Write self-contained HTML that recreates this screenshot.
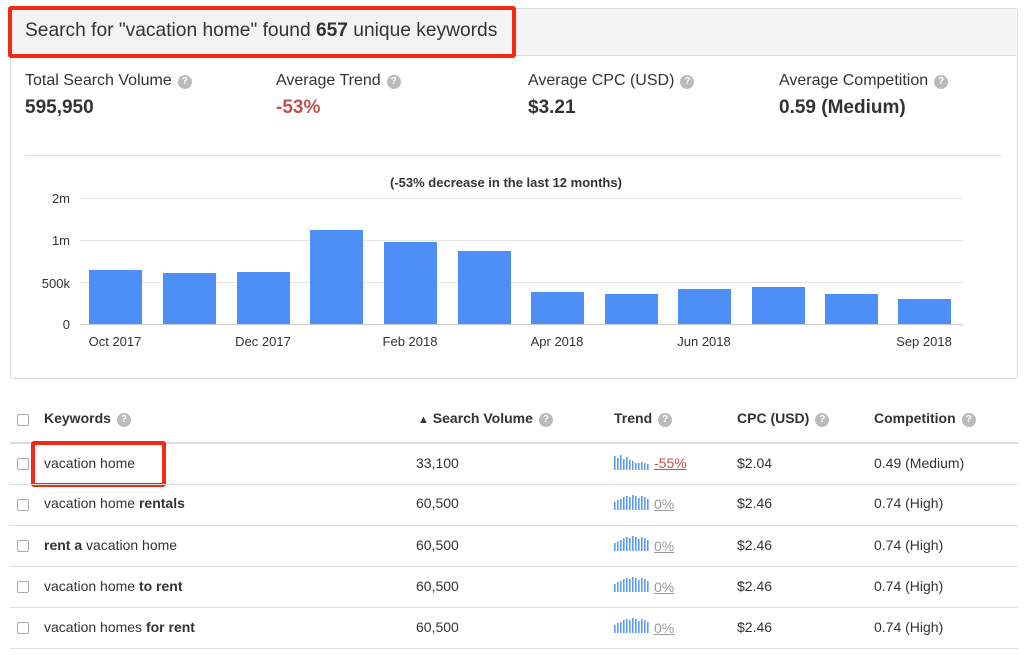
<!DOCTYPE html><html><head><style>
body{margin:0;width:1024px;height:655px;background:#fff;font-family:"Liberation Sans",sans-serif;color:#333;position:relative;overflow:hidden}
.a{position:absolute;white-space:nowrap}
.q{display:inline-block;width:14px;height:14px;border-radius:50%;background:#bbb;color:#fff;font-size:10px;font-weight:bold;text-align:center;line-height:14px;vertical-align:1px;margin-left:6px}
.lbl{font-size:16px;color:#333}
.val{font-size:19px;font-weight:bold;color:#333}
.th{font-size:14px;font-weight:bold;color:#333}
.td{font-size:14px;color:#333}
.cb{position:absolute;left:17px;width:10px;height:10px;border:1px solid #aaa;border-radius:2px;background:#fff}
.hl{position:absolute;left:10px;width:1008px;height:1px;background:#ddd}
.pct{font-size:14px;color:#999;text-decoration:underline}
</style></head><body>
<div class="a" style="left:10px;top:8px;width:1006px;height:369px;border:1px solid #ddd;border-radius:3px"></div>
<div class="a" style="left:11px;top:9px;width:1005px;height:46px;background:#f3f3f3;border-bottom:1px solid #ddd"></div>
<div class="a" style="left:8px;top:6px;width:500px;height:44px;border:4px solid #f22a12;border-radius:3px"></div>
<div class="a" style="left:25px;top:20px;font-size:19.2px;color:#333">Search for "vacation home" found <b>657</b> unique keywords</div>

<div class="a lbl" style="left:25px;top:72px">Total Search Volume<span class="q">?</span></div>
<div class="a val" style="left:25px;top:97px">595,950</div>
<div class="a lbl" style="left:276px;top:72px">Average Trend<span class="q">?</span></div>
<div class="a val" style="left:276px;top:97px;color:#c0504d">-53%</div>
<div class="a lbl" style="left:528px;top:72px">Average CPC (USD)<span class="q">?</span></div>
<div class="a val" style="left:528px;top:97px">$3.21</div>
<div class="a lbl" style="left:779px;top:72px">Average Competition<span class="q">?</span></div>
<div class="a val" style="left:779px;top:97px">0.59 (Medium)</div>
<div class="a" style="left:25px;top:155px;width:976px;height:1px;background:#ddd"></div>

<div class="a" style="left:390px;top:175px;font-size:13px;font-weight:bold">(-53% decrease in the last 12 months)</div>
<svg class="a" style="left:0;top:0" width="1024" height="380">
<g stroke="#e4e4e4" stroke-width="1">
<line x1="80" y1="198.5" x2="963" y2="198.5"/><line x1="80" y1="240.5" x2="963" y2="240.5"/><line x1="80" y1="282.5" x2="963" y2="282.5"/>
</g>
<line x1="80" y1="324.5" x2="963" y2="324.5" stroke="#ccc"/>
<g fill="#4e8ef7">
<rect x="89" y="270" width="53" height="54"/><rect x="163" y="273" width="53" height="51"/><rect x="237" y="272" width="53" height="52"/>
<rect x="310" y="230" width="53" height="94"/><rect x="384" y="242" width="53" height="82"/><rect x="458" y="251" width="53" height="73"/>
<rect x="531" y="292" width="53" height="32"/><rect x="605" y="294" width="53" height="30"/><rect x="678" y="289" width="53" height="35"/>
<rect x="752" y="287" width="53" height="37"/><rect x="825" y="294" width="53" height="30"/><rect x="898" y="299" width="53" height="25"/>
</g>
<g font-family="Liberation Sans" font-size="13" fill="#333" text-anchor="end">
<text x="70" y="203">2m</text><text x="70" y="245">1m</text><text x="70" y="288">500k</text><text x="70" y="329">0</text>
</g>
<g font-family="Liberation Sans" font-size="13" fill="#333" text-anchor="middle">
<text x="115" y="346">Oct 2017</text><text x="263" y="346">Dec 2017</text><text x="410" y="346">Feb 2018</text><text x="557" y="346">Apr 2018</text><text x="704" y="346">Jun 2018</text><text x="924" y="346">Sep 2018</text>
</g>
</svg>

<div class="cb" style="top:414px"></div>
<div class="a th" style="left:44px;top:410px">Keywords<span class="q">?</span></div>
<div class="a th" style="left:418px;top:410px"><span style="font-size:11px">▲</span> Search Volume<span class="q">?</span></div>
<div class="a th" style="left:614px;top:410px">Trend<span class="q">?</span></div>
<div class="a th" style="left:737px;top:410px">CPC (USD)<span class="q">?</span></div>
<div class="a th" style="left:874px;top:410px">Competition<span class="q">?</span></div>
<div class="hl" style="top:442px;height:2px"></div>

<div class="cb" style="top:458px"></div>
<div class="a" style="left:31px;top:441px;width:127px;height:38px;border:4px solid #f22a12;border-radius:3px"></div>
<div class="a td" style="left:44px;top:455px">vacation home</div>
<div class="a td" style="left:416px;top:455px">33,100</div>
<svg class="a" style="left:614px;top:454px" width="36" height="16"><g fill="#5b9bf7"><rect x="0" y="2" width="1.6" height="14"/><rect x="3" y="4" width="1.6" height="12"/><rect x="6" y="1" width="1.6" height="15"/><rect x="9" y="5" width="1.6" height="11"/><rect x="12" y="3" width="1.6" height="13"/><rect x="15" y="6" width="1.6" height="10"/><rect x="18" y="7" width="1.6" height="9"/><rect x="21" y="9" width="1.6" height="7"/><rect x="24" y="9" width="1.6" height="7"/><rect x="27" y="8" width="1.6" height="8"/><rect x="30" y="9" width="1.6" height="7"/><rect x="33" y="10" width="1.6" height="6"/></g></svg>
<div class="a pct" style="left:654px;top:455px;color:#c0504d">-55%</div>
<div class="a td" style="left:737px;top:455px">$2.04</div>
<div class="a td" style="left:874px;top:455px">0.49 (Medium)</div>
<div class="hl" style="top:484px"></div>

<div class="cb" style="top:499px"></div>
<div class="a td" style="left:44px;top:495px">vacation home <b>rentals</b></div>
<div class="a td" style="left:416px;top:495px">60,500</div>
<div class="hl" style="top:525px"></div>
<div class="cb" style="top:540px"></div>
<div class="a td" style="left:44px;top:537px"><b>rent a</b> vacation home</div>
<div class="a td" style="left:416px;top:537px">60,500</div>
<div class="hl" style="top:566px"></div>
<div class="cb" style="top:581px"></div>
<div class="a td" style="left:44px;top:578px">vacation home <b>to rent</b></div>
<div class="a td" style="left:416px;top:578px">60,500</div>
<div class="hl" style="top:607px"></div>
<div class="cb" style="top:622px"></div>
<div class="a td" style="left:44px;top:619px">vacation homes <b>for rent</b></div>
<div class="a td" style="left:416px;top:619px">60,500</div>
<div class="hl" style="top:648px"></div>

<svg class="a" style="left:614px;top:494px" width="36" height="150"><defs><g id="s" fill="#5b9bf7"><rect x="0" y="8" width="1.6" height="8"/><rect x="3" y="6" width="1.6" height="10"/><rect x="6" y="5" width="1.6" height="11"/><rect x="9" y="3" width="1.6" height="13"/><rect x="12" y="2" width="1.6" height="14"/><rect x="15" y="3" width="1.6" height="13"/><rect x="18" y="1" width="1.6" height="15"/><rect x="21" y="2" width="1.6" height="14"/><rect x="24" y="4" width="1.6" height="12"/><rect x="27" y="2" width="1.6" height="14"/><rect x="30" y="3" width="1.6" height="13"/><rect x="33" y="5" width="1.6" height="11"/></g></defs>
<use href="#s"/><use href="#s" y="41"/><use href="#s" y="82"/><use href="#s" y="123"/></svg>
<div class="a pct" style="left:654px;top:496px">0%</div>
<div class="a pct" style="left:654px;top:538px">0%</div>
<div class="a pct" style="left:654px;top:579px">0%</div>
<div class="a pct" style="left:654px;top:620px">0%</div>
<div class="a td" style="left:737px;top:495px">$2.46</div><div class="a td" style="left:874px;top:495px">0.74 (High)</div>
<div class="a td" style="left:737px;top:537px">$2.46</div><div class="a td" style="left:874px;top:537px">0.74 (High)</div>
<div class="a td" style="left:737px;top:578px">$2.46</div><div class="a td" style="left:874px;top:578px">0.74 (High)</div>
<div class="a td" style="left:737px;top:619px">$2.46</div><div class="a td" style="left:874px;top:619px">0.74 (High)</div>
</body></html>
